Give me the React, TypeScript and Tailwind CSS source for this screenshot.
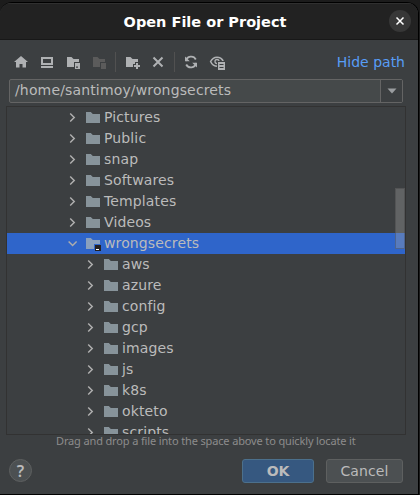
import React from "react";

const ui = "font-['DejaVu_Sans',sans-serif]";

function Folder({ project }: { project?: boolean }) {
  return (
    <svg className="block shrink-0" width="16" height="16" viewBox="0 0 16 16">
      <path d="M1 2h4.800l2 2H15v9H1z" fill={project ? "#8aa0bd" : "#87939a"} />
      {project && (
        <>
          <path d="M9 8h7v8H9z" fill="#2f65ca" />
          <path d="M10 9h6v6h-6z" fill="#231f20" />
          <path d="M11 13h3v1h-3z" fill="#fff" />
        </>
      )}
    </svg>
  );
}

function Row({ name, depth, open }: { name: string; depth: number; open?: boolean }) {
  return (
    <div className={`flex h-[21px] shrink-0 items-center ${open ? "bg-[#2f65ca]" : ""} ${depth ? "pl-[75px]" : "pl-[57px]"}`}>
      <svg className="relative -top-px mr-[5px] block shrink-0" width="16" height="16" viewBox="0 0 16 16" fill="none" stroke="#adadad" strokeWidth="1.5">
        <path d={open ? "M4.600 6.500l4 4 4-4" : "M6.200 4.500l4 4-4 4"} />
      </svg>
      <Folder project={open} />
      <span className="ml-[3px] whitespace-pre text-[14px] leading-[21px] tracking-[0.13px]">{name}</span>
    </div>
  );
}

const Icon = ({ children }: { children: React.ReactNode }) => (
  <svg className="block shrink-0" width="16" height="16" viewBox="0 0 16 16" fill="#afb1b3">
    {children}
  </svg>
);

export default function App() {
  return (
    <div className={`h-[495px] w-[420px] overflow-hidden bg-[#1c1c1c] pt-[2px] text-[#bbbbbb] ${ui}`}>
      <div className="flex h-[493px] w-[419px] flex-col overflow-hidden rounded-t-[12px] border-t border-r-[1px] border-b border-black bg-[#3c3f41]">
        <header className="relative flex h-[37px] shrink-0 items-center justify-center border-t border-b border-t-[#303030] border-b-[#181818] bg-[#222222] pr-[8px]">
          <h1 className="whitespace-nowrap text-[14.500px] font-bold leading-[20px] text-white">Open File or Project</h1>
          <button className="absolute right-[7px] top-[6px] flex h-[22px] w-[22px] items-center justify-center rounded-full bg-[#373737]">
            <svg width="10" height="10" viewBox="0 0 10 10" stroke="#fff" strokeWidth="1.5">
              <path d="M1.500 1.500l7 7M8.500 1.500l-7 7" />
            </svg>
          </button>
        </header>

        <div className="flex h-[39px] shrink-0 items-center pl-[13px] pr-[13px] pt-[4px]">
          <Icon><path d="M8 2l7 6h-2v5.500H9.500V10h-3v3.500H3V8H1z" /></Icon>
          <span className="w-[10px]" />
          <Icon><path fillRule="evenodd" d="M2 3h12v8H2zM4 5v4h8V5zM2 12h12v2H2z" /></Icon>
          <span className="w-[10px]" />
          <Icon>
            <path d="M2 3h4.500l2 2H14v3H9v5H2z" />
            <path fillRule="evenodd" d="M10 9h5v6h-5zM11 12.500v1.200h2v-1.200z" />
          </Icon>
          <span className="w-[10px]" />
          <Icon><path fill="#5b5b5b" d="M2 3h4.500l2 2H14v3H9v5H2zM10 9h5v6h-5z" /></Icon>
          <span className="ml-[8px] mr-[9px] h-[20px] w-px bg-[#515151]" />
          <Icon><path d="M1 3h4.500l2 2H13v3h-3v2H8v3H1zM11 9h2v2h2v2h-2v2h-2v-2H9v-2h2z" /></Icon>
          <span className="w-[9px]" />
          <Icon><path d="M3.500 3.500l9 9M12.500 3.500l-9 9" fill="none" stroke="#afb1b3" strokeWidth="2" /></Icon>
          <span className="ml-[8px] mr-[8px] h-[20px] w-px bg-[#515151]" />
          <Icon>
            <path d="M3 7a5.200 5.200 0 0 1 9.800-1.500M13 9a5.200 5.200 0 0 1-9.800 1.500" fill="none" stroke="#afb1b3" strokeWidth="1.800" />
            <path d="M2 2.500L6.800 7.200H2zM14 13.500L9.200 8.800H14z" />
          </Icon>
          <span className="w-[10px]" />
          <Icon>
            <path d="M8.500 12.300C4.500 12.300 2.500 9.500 1.600 7.500 3 4.800 5.200 3.200 8 3.200s5 1.600 6.200 3.800" fill="none" stroke="#afb1b3" strokeWidth="1.600" />
            <circle cx="8" cy="7.500" r="2" fill="none" stroke="#afb1b3" strokeWidth="1.300" />
            <path d="M8 7h8v9H8z" fill="#3c3f41" />
            <path fillRule="evenodd" d="M9 8h7v8H9zM10.500 10v1h4v-1zM10.500 13v1h4v-1z" />
          </Icon>
          <span className="ml-auto whitespace-nowrap text-[14px] leading-[20px] text-[#589df6]">Hide path</span>
        </div>

        <div className="ml-[9px] flex h-[24px] w-[394px] shrink-0 rounded-[2px] border border-[#646464] bg-[#45494a]">
          <span className="flex-1 whitespace-nowrap pl-[5px] text-[14px] leading-[21px] tracking-[0.15px]">/home/santimoy/wrongsecrets</span>
          <span className="flex w-[22px] items-center justify-center border-l border-[#646464] bg-[#3c3f41]">
            <svg width="10" height="6" viewBox="0 0 10 6"><path d="M.5.500h9L5 5.500z" fill="#9a9da0" /></svg>
          </span>
        </div>

        <div className="relative ml-[6px] mt-[3px] flex h-[329px] w-[400px] shrink-0 flex-col overflow-hidden border border-[#323232]">
          <Row name="Pictures" depth={0} />
          <Row name="Public" depth={0} />
          <Row name="snap" depth={0} />
          <Row name="Softwares" depth={0} />
          <Row name="Templates" depth={0} />
          <Row name="Videos" depth={0} />
          <Row name="wrongsecrets" depth={0} open />
          <Row name="aws" depth={1} />
          <Row name="azure" depth={1} />
          <Row name="config" depth={1} />
          <Row name="gcp" depth={1} />
          <Row name="images" depth={1} />
          <Row name="js" depth={1} />
          <Row name="k8s" depth={1} />
          <Row name="okteto" depth={1} />
          <Row name="scripts" depth={1} />
          <div className="absolute right-0 top-[81px] h-[61px] w-[10px] border border-[#383838]/35 bg-[#a6a6a6]/35" />
        </div>

        <p className="h-[15px] shrink-0 whitespace-nowrap pl-[56px] font-['Noto_Sans',sans-serif] text-[11px] leading-[12px] tracking-[-0.140px] text-[#8c8c8c]">
          Drag and drop a file into the space above to quickly locate it
        </p>

        <footer className="flex items-start pl-[9px] pt-[9px]">
          <button className="flex h-[23px] w-[23px] items-center justify-center rounded-full border border-[#5e6060] bg-[#4c5052] font-['Noto_Sans',sans-serif] text-[16px] font-semibold leading-none">?</button>
          <button className="ml-[210px] h-[24px] w-[72px] rounded-[3px] border border-[#4c708c] bg-[#365880] text-[14px] font-bold leading-[22px]">OK</button>
          <button className="ml-[12px] h-[24px] w-[77px] rounded-[3px] border border-[#5e6060] bg-[#4c5052] text-[14px] leading-[22px] tracking-[0.13px]">Cancel</button>
        </footer>
      </div>
    </div>
  );
}
